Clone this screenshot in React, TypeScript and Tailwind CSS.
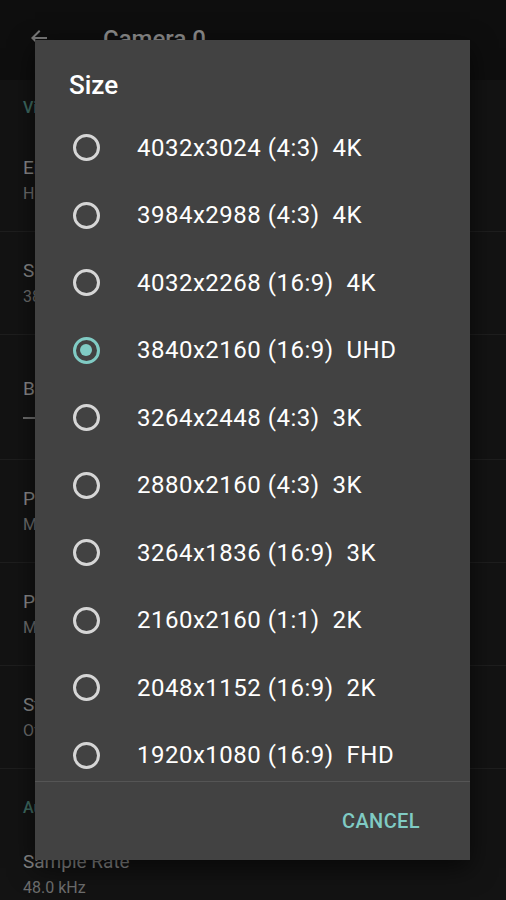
// Camera settings screen with the "Size" picker dialog open

const sizes = [
  { res: "4032x3024", ratio: "4:3", label: "4K" },
  { res: "3984x2988", ratio: "4:3", label: "4K" },
  { res: "4032x2268", ratio: "16:9", label: "4K" },
  { res: "3840x2160", ratio: "16:9", label: "UHD" },
  { res: "3264x2448", ratio: "4:3", label: "3K" },
  { res: "2880x2160", ratio: "4:3", label: "3K" },
  { res: "3264x1836", ratio: "16:9", label: "3K" },
  { res: "2160x2160", ratio: "1:1", label: "2K" },
  { res: "2048x1152", ratio: "16:9", label: "2K" },
  { res: "1920x1080", ratio: "16:9", label: "FHD" },
];

const SELECTED = 3;

function Radio({ checked }: { checked: boolean }) {
  if (checked) {
    return (
      <span className="flex h-[27px] w-[27px] items-center justify-center rounded-full border-[3px] border-[#80cbc4]">
        <span className="h-[12px] w-[12px] rounded-full bg-[#80cbc4]" />
      </span>
    );
  }
  return <span className="h-[27px] w-[27px] rounded-full border-[3px] border-[#d6d6d6]" />;
}

function Pref({ title, summary }: { title: string; summary: string }) {
  return (
    <div className="flex h-[103px] flex-col justify-center border-b border-[#1e1e1e] pl-[23px]">
      <div className="text-[19px] leading-[28px] text-[#8a8a8a]">{title}</div>
      <div className="text-[16px] leading-[24px] text-[#6e6e6e]">{summary}</div>
    </div>
  );
}

export default function App() {
  return (
    <div
      className="relative h-[900px] w-[506px] overflow-hidden bg-[#131313]"
      style={{ fontFamily: "Roboto, 'Noto Sans', sans-serif" }}
    >
      {/* Background settings page (dimmed) */}
      <div className="flex h-[80px] items-center gap-[52px] bg-[#0e0e0e] pl-[27px]">
        <svg width="24" height="24" viewBox="0 0 24 24" className="mt-[-4px]">
          <path d="M20 11H7.83l5.59-5.59L12 4l-8 8 8 8 1.41-1.41L7.83 13H20v-2z" fill="#7a7a7a" />
        </svg>
        <div className="mt-[-2px] text-[24px] font-medium text-[#8a8a8a]">Camera 0</div>
      </div>

      <div className="flex h-[49px] items-center pl-[23px] pt-[6px] text-[16px] font-medium text-[#3f6b62]">Video</div>
      <Pref title="Encoder" summary="H.264" />
      <Pref title="Size" summary="3840x2160" />
      <div className="flex h-[125px] flex-col justify-center border-b border-[#1e1e1e] pl-[23px]">
        <div className="text-[19px] leading-[28px] text-[#8a8a8a]">Bitrate</div>
        <div className="mt-[14px] h-[2px] w-[20px] bg-[#6e6e6e]" />
      </div>
      <Pref title="Profile" summary="Main" />
      <Pref title="Profile level" summary="Main" />
      <Pref title="Stabilization" summary="Off" />
      <div className="flex h-[70px] items-center pl-[23px] pt-[8px] text-[16px] font-medium text-[#3f6b62]">Audio</div>
      <div className="flex h-[70px] flex-col justify-center pl-[23px]">
        <div className="text-[19px] leading-[28px] text-[#8a8a8a]">Sample Rate</div>
        <div className="text-[16px] leading-[24px] text-[#6e6e6e]">48.0 kHz</div>
      </div>

      {/* Dialog */}
      <div className="absolute left-[35px] top-[40px] flex h-[820px] w-[435px] flex-col bg-[#424242] shadow-[0_8px_24px_rgba(0,0,0,0.6)]">
        <div className="pl-[34px] pt-[27px] text-[26px] font-medium leading-[36px] text-white">Size</div>
        <div className="mt-[11px] flex min-h-0 flex-1 flex-col overflow-hidden">
          {sizes.map((s, i) => (
            <div key={i} className="flex h-[67.5px] shrink-0 items-center">
              <div className="flex w-[102px] justify-center">
                <Radio checked={i === SELECTED} />
              </div>
              <div className="whitespace-pre text-[24px] tracking-[0.5px] text-white">
                {`${s.res} (${s.ratio})  ${s.label}`}
              </div>
            </div>
          ))}
        </div>
        <div className="flex h-[79px] shrink-0 items-center justify-end border-t border-[#555555] pr-[50px]">
          <div className="text-[20px] font-medium tracking-[0.4px] text-[#80cbc4]">CANCEL</div>
        </div>
      </div>
    </div>
  );
}
